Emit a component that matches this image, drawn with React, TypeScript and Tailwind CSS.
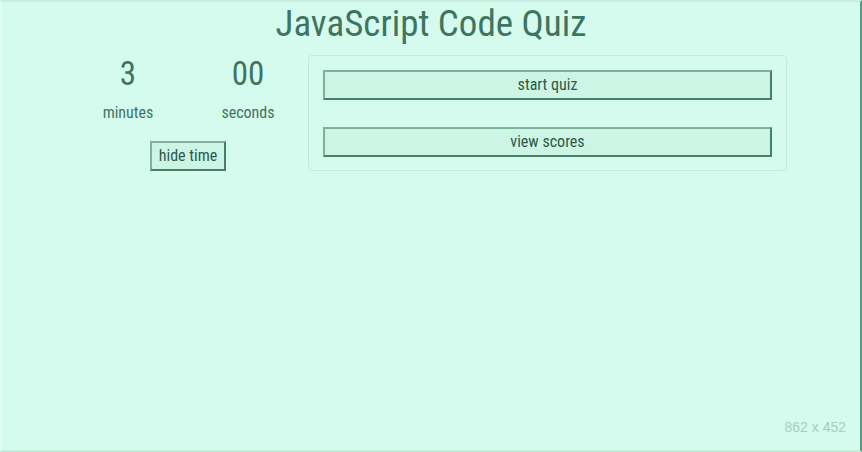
import React from "react";

export default function App() {
  const font = { fontFamily: "'Roboto Condensed', Roboto, 'Open Sans', sans-serif" };
  const btn =
    "h-[30px] text-[16px] leading-[20px] bg-[#cdf5e5] text-[#2b5a47] border-2 border-t-[#7eb09b] border-l-[#7eb09b] border-r-[#4a7d68] border-b-[#4a7d68]";
  return (
    <div
      className="relative w-[862px] h-[452px] bg-[#d5fbee] text-[#3f7560] overflow-hidden border-t-2 border-l-2 border-r-2 border-b-2 border-t-[#c6eee0] border-l-[#e2fdf3] border-r-[#5a9a82] border-b-[#c2ebdc]"
      style={font}
    >
      <h1 className="text-center text-[37px] leading-[44px] text-[#3f7560]">
        JavaScript Code Quiz
      </h1>
      <div className="flex mt-[9px] pl-[66px]">
        <div className="w-[240px] flex flex-col items-center">
          <div className="grid grid-cols-2 w-full">
            <div className="flex flex-col items-center">
              <div className="text-[33px] leading-[38px]">3</div>
              <div className="text-[16px] leading-[20px] mt-[10px]">minutes</div>
            </div>
            <div className="flex flex-col items-center">
              <div className="text-[33px] leading-[38px]">00</div>
              <div className="text-[16px] leading-[20px] mt-[10px]">seconds</div>
            </div>
          </div>
          <button className={`mt-[18px] px-[7px] ${btn}`}>hide time</button>
        </div>
        <div className="w-[479px] border border-[#c4eadb] rounded-[4px] px-[14px] pt-[14px] pb-[13px] flex flex-col gap-[27px]">
          <button className={`w-full ${btn}`}>start quiz</button>
          <button className={`w-full ${btn}`}>view scores</button>
        </div>
      </div>
      <div
        className="absolute right-[14px] bottom-[12px] text-[14px] text-[#a9ccbf]"
        style={{ fontFamily: "'Liberation Sans', Arial, sans-serif" }}
      >
        862 x 452
      </div>
    </div>
  );
}
